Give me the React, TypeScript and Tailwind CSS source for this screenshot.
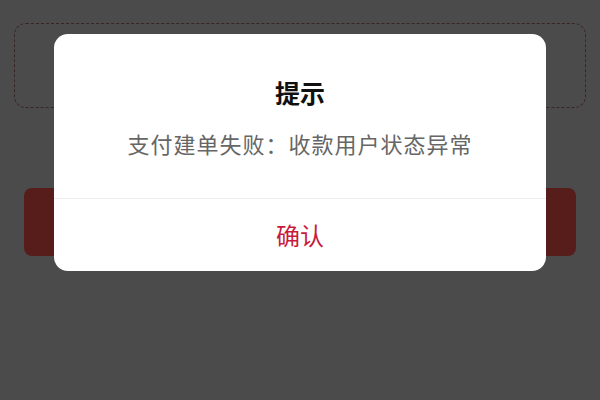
export default function App() {
    return (
        <div
            className="relative h-[400px] w-[600px] overflow-hidden bg-[#4b4b4b]"
            style={{ fontFamily: '"Noto Sans CJK SC", "Noto Sans", sans-serif' }}
        >
            {/* page underneath the overlay */}
            <div className="px-[14px] pt-[23px]">
                <div className="h-[85px] rounded-[12px] border-[1.5px] border-dashed border-[#3a2424]" />
                <div className="mx-[10px] mt-[80px] h-[68px] rounded-[8px] bg-[#561d1b]" />
            </div>

            {/* dialog */}
            <div className="absolute left-[54px] top-[34px] w-[492px] overflow-hidden rounded-[14px] bg-white">
                <div className="flex flex-col items-center px-6 pb-[39px] pt-[40px]">
                    <h2 className="text-[25px] font-bold leading-[36px] text-[#111111]">提示</h2>
                    <p className="mt-[17px] text-[22px] leading-[32px] tracking-[1px] text-[#666666]">
                        支付建单失败：收款用户状态异常
                    </p>
                </div>
                <div className="h-px bg-[#eeeeee]" />
                <button
                    type="button"
                    className="flex h-[72px] w-full items-center justify-center text-[24px] text-[#c81a3a]"
                >
                    确认
                </button>
            </div>
        </div>
    );
}
